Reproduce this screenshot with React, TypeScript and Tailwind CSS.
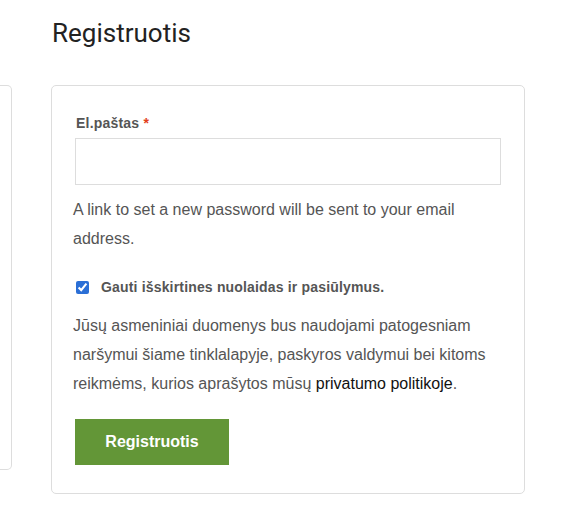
import { useState } from "react";

export default function App() {
  const [email, setEmail] = useState("");
  const [offers, setOffers] = useState(true);

  return (
    <div className="min-h-[526px] w-[582px] overflow-hidden bg-white font-['Liberation_Sans',Arial,sans-serif] text-[#555]">
      <div className="flex">
        {/* left column, mostly off-screen */}
        <div className="mt-[85px] h-[385px] w-[12px] shrink-0 rounded-r-[5px] border border-l-0 border-[#ddd]" />

        <div className="ml-[39px] w-[474px] shrink-0">
          <h2 className="mt-[18px] mb-[36px] pl-[1px] font-['Roboto',sans-serif] text-[26px] leading-[31px] font-normal text-[#222]">
            Registruotis
          </h2>

          <form
            className="rounded-[5px] border border-[#ddd] px-[21px] pt-[27px] pb-[28px]"
            onSubmit={(e) => e.preventDefault()}
          >
            <label htmlFor="reg_email" className="block pl-[3px] text-[14px] leading-[20px] font-bold tracking-[0.2px]">
              El.paštas <span className="text-[#e2401c]">*</span>
            </label>
            <input
              id="reg_email"
              type="email"
              value={email}
              onChange={(e) => setEmail(e.target.value)}
              className="mt-[5px] ml-[2px] block h-[47px] w-[426px] border border-[#ddd] bg-white px-3 text-[16px] outline-none"
            />

            <p className="mt-[10px] text-[16px] leading-[29px]">
              A link to set a new password will be sent to your email address.
            </p>

            <label className="mt-[24px] flex items-center text-[14px] leading-[20px] font-bold tracking-[0.17px]">
              <input
                type="checkbox"
                checked={offers}
                onChange={(e) => setOffers(e.target.checked)}
                className="ml-[3px] h-[13px] w-[13px] accent-[#2b6fd6]"
              />
              <span className="ml-[12px]">Gauti išskirtines nuolaidas ir pasiūlymus.</span>
            </label>

            <p className="mt-[14px] text-[16px] leading-[29px]">
              Jūsų asmeniniai duomenys bus naudojami patogesniam naršymui šiame tinklalapyje, paskyros valdymui bei
              kitoms reikmėms, kurios aprašytos mūsų{" "}
              <a href="#" className="text-[#111]">
                privatumo politikoje
              </a>
              .
            </p>

            <button
              type="submit"
              className="mt-[21px] ml-[2px] h-[46px] w-[154px] bg-[#639637] text-[16px] font-bold text-white"
            >
              Registruotis
            </button>
          </form>
        </div>
      </div>
    </div>
  );
}
